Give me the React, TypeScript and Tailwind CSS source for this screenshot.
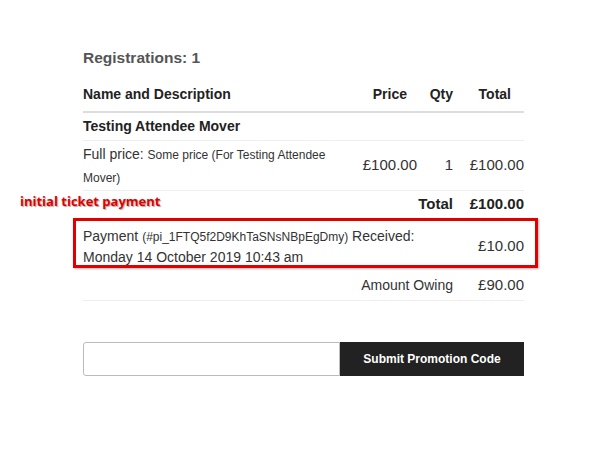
import React from "react";

export default function App() {
  return (
    <div className="w-[600px] h-[473px] bg-white relative" style={{ fontFamily: '"Liberation Sans", Arial, sans-serif' }}>
      <div className="pl-[83px] pr-[76px] pt-[48px]">
        <div className="text-[15.5px] font-bold text-[#555] leading-[20px]">Registrations: 1</div>
        <div className="mt-[16px] flex items-center text-[14px] font-bold text-[#222] h-[20px] pb-[7px] box-content border-b-2 border-[#ddd]">
          <div className="flex-1">Name and Description</div>
          <div className="w-[60px] text-right">Price</div>
          <div className="w-[46px] text-right">Qty</div>
          <div className="w-[71px] text-right pr-[13px]">Total</div>
        </div>
        <div className="flex items-center h-[28px] border-b border-[#eee] text-[14px] font-bold text-[#222]">Testing Attendee Mover</div>
        <div className="flex items-center h-[50px] border-b border-[#eee] text-[#333]">
          <div className="flex-1 leading-[22px] pr-[10px]">
            <span className="text-[14px]">Full price: </span>
            <span className="text-[12px]">Some price (For Testing Attendee Mover)</span>
          </div>
          <div className="w-[70px] text-right text-[15px]">£100.00</div>
          <div className="w-[36px] text-right text-[15px]">1</div>
          <div className="w-[71px] text-right text-[15px]">£100.00</div>
        </div>
        <div className="relative flex items-center justify-end h-[27px] text-[15px] font-bold text-[#222]">
          <span className="absolute left-[-63px] top-[1px] text-[13px] font-bold text-[#e00000] [text-shadow:1px_1px_1px_rgba(0,0,0,0.35)]" style={{ fontFamily: '"Open Sans", sans-serif' }}>initial ticket payment</span>
          <span>Total</span>
          <span className="w-[71px] text-right">£100.00</span>
        </div>
        <div className="relative flex items-center h-[50px] pt-[6px] text-[#333]">
          <div className="absolute left-[-10px] right-[-14px] top-0 bottom-0 border-[3px] border-[#e00000] shadow-[1px_1px_2px_rgba(0,0,0,0.3)]" />
          <div className="flex-1 leading-[20px] pr-[20px] text-[14px]">
            Payment <span className="text-[12px]">(#pi_1FTQ5f2D9KhTaSNsNBpEgDmy)</span> Received: Monday 14 October 2019 10:43 am
          </div>
          <div className="w-[71px] text-right text-[15px]">£10.00</div>
        </div>
        <div className="flex items-center justify-end h-[33px] pt-[2px] border-b border-[#eee] text-[#333] text-[14px]">
          <span>Amount Owing</span>
          <span className="w-[71px] text-right text-[15px]">£90.00</span>
        </div>
        <div className="mt-[41px] flex h-[34px]">
          <div className="w-[257px] border border-[#bbb] rounded-l-[3px] bg-white" />
          <button className="flex-1 bg-[#222] text-white text-[12px] font-bold">Submit Promotion Code</button>
        </div>
      </div>
    </div>
  );
}
